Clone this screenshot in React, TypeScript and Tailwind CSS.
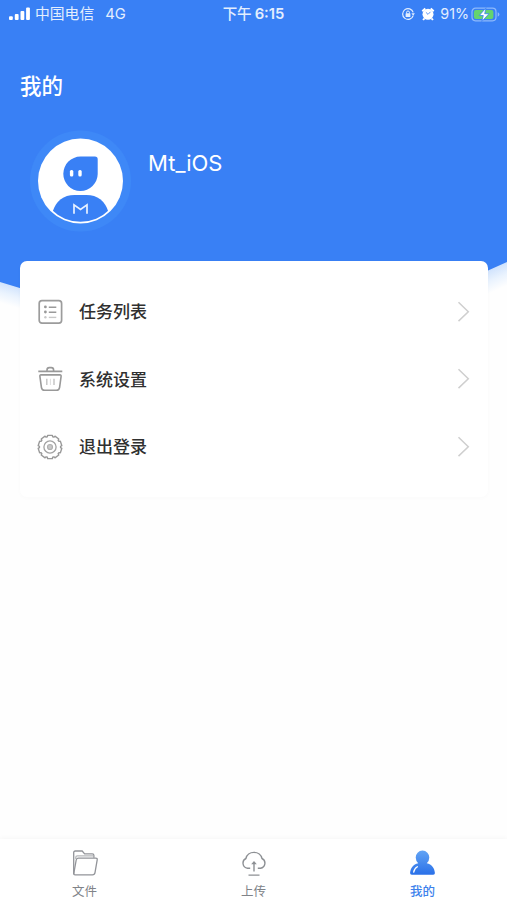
import type { ReactNode } from "react";

function ListIcon() {
  return (
    <svg className="h-[26px] w-[26px]" viewBox="0 0 26 26" fill="none" stroke="#9c9c9c" strokeWidth="1.7">
      <rect x="2.200" y="1.700" width="22.400" height="22.400" rx="2.800" />
      <g stroke="#9a9a9a" strokeWidth="1.400">
        <path d="M11.800 8.200h7.500M11.800 13.200h7.500" />
        <path d="M11.800 18.400h7.500" stroke="#c8c8c8" />
      </g>
      <g fill="#999" stroke="none">
        <circle cx="8.400" cy="7.900" r="1.400" />
        <circle cx="8.400" cy="13" r="1.400" />
        <circle cx="8.400" cy="18.200" r="1.200" fill="#c8c8c8" />
      </g>
    </svg>
  );
}

function BasketIcon() {
  return (
    <svg className="h-[26px] w-[26px]" viewBox="0 0 26 26" fill="none" stroke="#999" strokeWidth="1.600">
      <path d="M1.300 5.400h24M10 5V4q0-2.400 2.300-2.400h2Q16.600 1.600 16.600 4v1" />
      <path d="M4 8.900h18.900q1.400 0 1.200 1.400l-1.500 11q-.4 3-3.200 3H7.600q-2.800 0-3.200-3l-1.500-11Q2.700 8.900 4 8.900z" />
      <path d="M9.800 12.800v6.200M17 12.800v6.200" strokeWidth="1.400" stroke="#c2c2c2" />
      <path d="M13.400 12.800v6.200" strokeWidth="1" stroke="#dedede" />
    </svg>
  );
}

const TEETH = 10;

// Each tooth is a flat outer edge joined to its neighbours by a shallow notch.
const gearPoints = Array.from({ length: TEETH }, (_, tooth) =>
  [
    [-0.32, 11.9],
    [0.32, 11.9],
    [0.4, 10.600],
    [0.6, 10.600],
  ].map(([offset, radius]) => {
    const angle = ((tooth + offset) / TEETH) * Math.PI * 2 - Math.PI / 2;
    return `${(13 + radius * Math.cos(angle)).toFixed(2)},${(13 + radius * Math.sin(angle)).toFixed(2)}`;
  }),
)
  .flat()
  .join(" ");

function GearIcon() {
  return (
    <svg className="h-[26px] w-[26px]" viewBox="0 0 26 26" fill="none" stroke="#999" strokeWidth="1.400">
      <polygon strokeLinejoin="round" points={gearPoints} />
      <circle cx="13" cy="13" r="6.100" stroke="#a2a2a2" strokeWidth="1.300" />
      <circle cx="13" cy="13" r="2.500" fill="#c8c8c8" stroke="#b0b0b0" strokeWidth="1.200" />
    </svg>
  );
}

function Avatar() {
  return (
    <svg className="h-[104px] w-[104px] shrink-0" viewBox="0 0 104 104">
      <defs>
        <clipPath id="face">
          <circle cx="52.500" cy="52" r="40.800" />
        </clipPath>
      </defs>
      <circle cx="52.500" cy="52" r="50.500" fill="#3e88f7" />
      <circle cx="52.500" cy="52" r="42.500" fill="#fff" />
      <path d="M52.500 27.600h14.400q2.800 0 2.800 2.800V45a17.200 17.200 0 1 1-17.200-17.400z" fill="#3980f5" />
      <rect x="41.900" y="41" width="3.400" height="6.600" rx="1.500" fill="#fff" />
      <rect x="50.300" y="41" width="3.400" height="6.600" rx="1.500" fill="#fff" />
      <path
        clipPath="url(#face)"
        d="M24.500 83Q30 66 46.500 66h12Q75 66 80.500 83v16h-56z"
        fill="#3980f5"
      />
      <path d="M46 84.800v-9l6.500 4.700 6.500-4.700v9" fill="none" stroke="#e8f1ff" strokeWidth="1.700" />
    </svg>
  );
}

function StatusBar() {
  return (
    <div className="grid h-7 grid-cols-3 items-center text-[14.500px] leading-none text-[#e3eefe]">
      <div className="flex items-center pl-[9px]">
        <svg className="h-[14px] w-[22px]" viewBox="0 0 22 14" fill="#fff">
          <rect x="0" y="9.200" width="3.800" height="3.800" rx="1" />
          <rect x="5.800" y="7" width="3.800" height="6" rx="1" />
          <rect x="11.500" y="4" width="3.800" height="9" rx="1" />
          <rect x="17.100" y="0.500" width="3.800" height="12.500" rx="1" />
        </svg>
        <span className="ml-[4px] pt-px text-[14.800px]">中国电信</span>
        <span className="ml-[11px] text-[14.800px]">4G</span>
      </div>
      <div className="flex items-center justify-center gap-[3px] font-semibold">
        <span className="text-[14.500px] font-medium">下午</span>
        <span className="text-[14.800px]">6:15</span>
      </div>
      <div className="flex items-center justify-end pr-[7px]">
        <svg className="h-[14px] w-[14px]" viewBox="0 0 14 14" fill="none" stroke="#e3eefe" strokeWidth="1.200">
          <path d="M12.200 8.600A5.400 5.400 0 1 1 12.200 5.400" />
          <path d="m10.400 6.200 3.500 0-1.700 2.500z" fill="#e3eefe" stroke="none" />
          <rect x="4.600" y="6.300" width="4.800" height="3.600" rx=".5" fill="#e3eefe" stroke="none" />
          <path d="M5.600 6.600V5.200q0-1.200 1.400-1.200t1.400 1.200v1.400" strokeWidth="1" />
        </svg>
        <svg className="ml-[6px] h-[14px] w-[14px]" viewBox="0 0 14 14">
          <circle cx="7" cy="7.300" r="5.500" fill="#fff" />
          <path d="M1.300 4.200 4.300 1.500M9.700 1.500l3 2.700M3.300 11.500l-1.200 1.500M10.700 11.500l1.200 1.500" stroke="#fff" strokeWidth="2" />
          <path d="M4.900 5.300 7 7.400l2.500-2.600" fill="none" stroke="#5c97f6" strokeWidth="1" />
        </svg>
        <span className="ml-[5px] text-[14.300px]">91%</span>
        <svg className="ml-[2px] h-[15px] w-[29px]" viewBox="0 0 29 15">
          <rect x="1" y="1.200" width="24" height="12.600" rx="3.500" fill="none" stroke="#8eb9fb" strokeWidth="1.200" />
          <rect x="2.900" y="3.100" width="19.500" height="8.800" rx="2" fill="#65d36e" />
          <path d="M26.700 5.300q1.700.6 1.700 2.200t-1.700 2.200z" fill="#8eb9fb" />
          <path d="M15 .8 8.300 8.500h4l-1.500 6 7.200-7.800h-4.300z" fill="#fff" stroke="#3980f5" strokeWidth=".8" />
        </svg>
      </div>
    </div>
  );
}

function MenuRow({ icon, label }: { icon: ReactNode; label: string }) {
  return (
    <button className="flex h-[67.500px] w-full items-center pr-[18px] pl-[17.500px] text-left">
      {icon}
      <span className="ml-[16px] flex-1 pt-[2px] text-[17px] leading-none font-medium text-[#303030]">{label}</span>
      <svg className="h-[22px] w-[13px]" viewBox="0 0 13 22" fill="none" stroke="#cfcfcf" strokeWidth="1.500">
        <path d="m1.500 1.300 9.800 9.400-9.800 9.400" />
      </svg>
    </button>
  );
}

function Tab({ icon, label, active = false }: { icon: ReactNode; label: string; active?: boolean }) {
  return (
    <button className="flex flex-1 flex-col items-center pt-[9px]">
      {icon}
      <span className={active ? "mt-[8px] text-[12.500px] leading-none font-medium text-[#3d82ec]" : "mt-[8px] text-[12.500px] leading-none text-[#808388]"}>
        {label}
      </span>
    </button>
  );
}

export default function App() {
  return (
    <div className="relative isolate flex h-[900px] w-[507px] flex-col overflow-hidden bg-[#fefefe] font-['Inter','Noto_Sans_CJK_SC',sans-serif]">
      <svg className="absolute top-0 left-0 -z-10 h-[330px] w-[507px]" viewBox="0 0 507 330">
        <defs>
          <linearGradient id="glowLeft" gradientUnits="userSpaceOnUse" x1="10" y1="284" x2="4" y2="304">
            <stop stopColor="#cfe2fd" />
            <stop offset="0.500" stopColor="#eaf3fe" />
            <stop offset="1" stopColor="#fefefe" />
          </linearGradient>
          <linearGradient id="glowRight" gradientUnits="userSpaceOnUse" x1="497" y1="266" x2="506" y2="286">
            <stop stopColor="#cfe2fd" />
            <stop offset="0.500" stopColor="#eaf3fe" />
            <stop offset="1" stopColor="#fefefe" />
          </linearGradient>
        </defs>
        <path d="M0 270h40v60H0z" fill="url(#glowLeft)" />
        <path d="M467 250h40v80h-40z" fill="url(#glowRight)" />
        <path d="M0 0h507v262l-19 8.500L440 292H33L0 282z" fill="#3980f5" />
      </svg>

      <StatusBar />
      <h1 className="mt-[47px] ml-[20px] text-[21.500px] leading-[22px] font-medium text-white">我的</h1>

      <section className="mt-[32px] ml-[28px] flex items-start">
        <Avatar />
        <p className="mt-[21px] ml-[16px] text-[22px] leading-[26px] font-normal text-white">Mt_iOS</p>
      </section>

      <main className="mx-[19.500px] mt-[28px] h-[236px] rounded-[7px] bg-white pt-[17px] shadow-[0_1px_5px_rgba(0,0,0,0.018)]">
        <MenuRow icon={<ListIcon />} label="任务列表" />
        <MenuRow icon={<BasketIcon />} label="系统设置" />
        <MenuRow icon={<GearIcon />} label="退出登录" />
      </main>

      <nav className="mt-auto flex h-[61px] bg-white shadow-[0_-1px_5px_rgba(0,0,0,0.035)]">
        <Tab
          label="文件"
          icon={
            <svg className="h-[30px] w-[30px]" viewBox="0 0 30 30" fill="none" stroke="#929499" strokeWidth="1.300" strokeLinejoin="round">
              <path d="M3.700 26V4.600Q3.700 3 5.300 3h6.900l2.400 2.800h7.700q1.600 0 1.600 1.600v2.400" />
              <path d="M3.700 26 6.200 12q.3-1.900 2.300-1.900h17.200q1.800 0 1.500 1.700l-2.200 12.800q-.4 2.200-2.500 2.200H5q-1.300 0-1.300-1.300z" />
              <path d="M5.800 11V9.300q0-1.400 1.500-1.400h15.800" stroke="#b6b8bb" />
            </svg>
          }
        />
        <Tab
          label="上传"
          icon={
            <svg className="h-[30px] w-[30px]" viewBox="0 0 30 30" fill="none" stroke="#8d9094" strokeWidth="1.400">
              <path d="M11.200 20.300H8.500A5.200 5.200 0 0 1 6.900 10.500 8.200 7.600 0 0 1 23 10.500a5.200 5.200 0 0 1-1.500 9.800h-2.700M15 23.500v-9.500M9.500 27.100h11" />
              <path d="m12.200 16.200 2.800-3.200 2.800 3.200z" fill="#8d9094" stroke="none" />
            </svg>
          }
        />
        <Tab
          active
          label="我的"
          icon={
            <svg className="h-[30px] w-[30px]" viewBox="0 0 30 30">
              <defs>
                <linearGradient id="user" x1="0" y1="0" x2="0" y2="1">
                  <stop stopColor="#62a4f5" />
                  <stop offset="1" stopColor="#2a70e8" />
                </linearGradient>
              </defs>
              <path
                d="M14.500 2.600a6.800 6.800 0 0 1 6.800 7q0 3.300-2.500 5.600c5 1.200 7.700 4.600 8.100 9.800q.1 1.800-1.700 1.800H3.800Q2 26.800 2.100 25c.4-5.200 3.100-8.600 8.100-9.800Q7.700 12.900 7.700 9.600a6.800 6.800 0 0 1 6.800-7z"
                fill="url(#user)"
              />
              <path d="M5.700 24.200q.5-3.700 3.700-5.400" fill="none" stroke="#fff" strokeWidth="1.300" strokeLinecap="round" />
            </svg>
          }
        />
      </nav>
    </div>
  );
}
